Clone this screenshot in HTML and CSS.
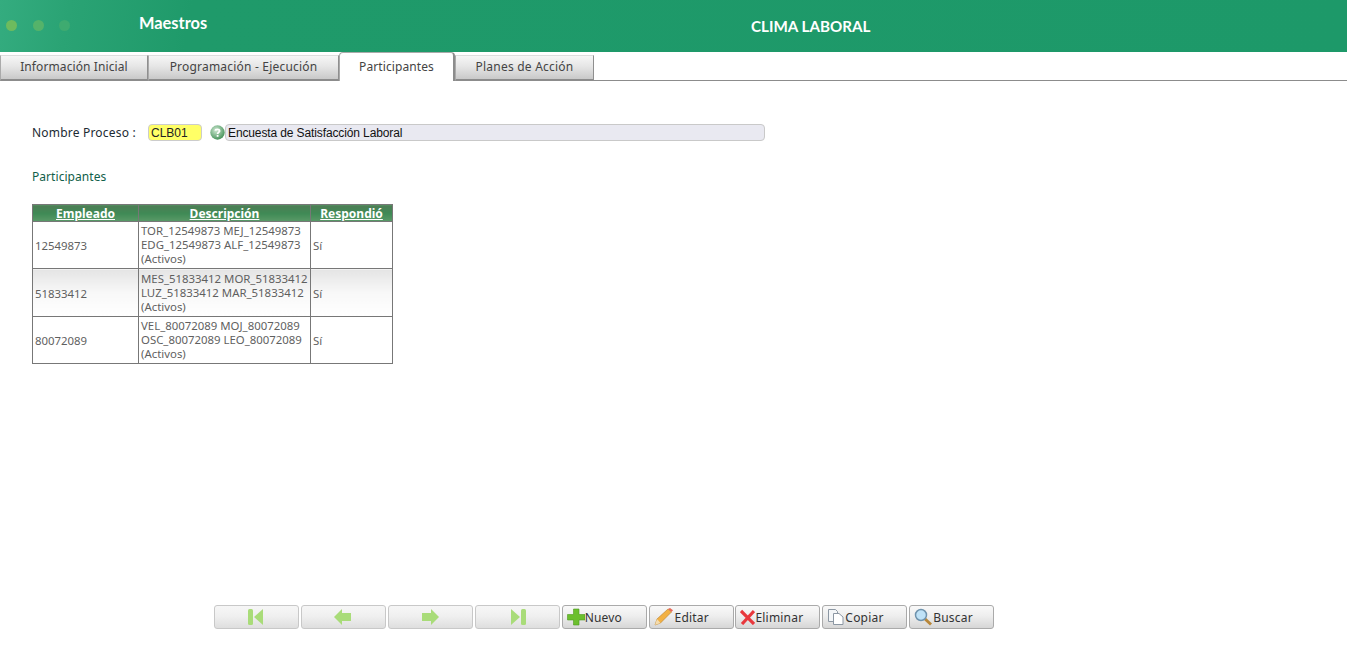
FILE: index.html
```html
<!DOCTYPE html>
<html lang="es">
<head>
<meta charset="utf-8">
<title>Clima Laboral</title>
<link rel="stylesheet" href="styles.css">
</head>
<body>
<div class="page">
  <header class="topbar">
    <div class="dots"><i class="dot d1"></i><i class="dot d2"></i><i class="dot d3"></i></div>
    <div class="brand">Maestros</div>
    <div class="title">CLIMA LABORAL</div>
  </header>
  <nav class="tabs">
    <a class="tab t1">Información Inicial</a>
    <a class="tab t2">Programación - Ejecución</a>
    <a class="tab t3 active">Participantes</a>
    <a class="tab t4">Planes de Acción</a>
  </nav>
  <main class="content">
    <div class="process">
      <span class="plabel">Nombre Proceso :</span>
      <span class="code">CLB01</span>
      <svg class="help" width="15" height="15" viewBox="0 0 15 15"><defs><radialGradient id="hg" cx=".4" cy=".35" r=".7"><stop offset="0" stop-color="#cfe8d2"/><stop offset="1" stop-color="#3f8f55"/></radialGradient></defs><circle cx="7.5" cy="7.5" r="7.2" fill="url(#hg)"/><path d="M5.2 5.600c.2-1.600 4.200-1.900 4.400.2.100 1.500-2 1.600-2 3.100" fill="none" stroke="#fff" stroke-width="1.800"/><rect x="6.700" y="10" width="1.800" height="1.800" fill="#fff"/></svg>
      <span class="desc">Encuesta de Satisfacción Laboral</span>
    </div>
    <h2 class="section">Participantes</h2>
    <table class="grid">
      <colgroup><col class="c1"><col class="c2"><col class="c3"></colgroup>
      <thead>
        <tr><th><a>Empleado</a></th><th><a>Descripción</a></th><th><a>Respondió</a></th></tr>
      </thead>
      <tbody>
        <tr><td class="mid">12549873</td><td>TOR_12549873 MEJ_12549873 EDG_12549873 ALF_12549873 (Activos)</td><td class="mid">Sí</td></tr>
        <tr class="alt"><td class="mid">51833412</td><td>MES_51833412 MOR_51833412 LUZ_51833412 MAR_51833412 (Activos)</td><td class="mid">Sí</td></tr>
        <tr><td class="mid">80072089</td><td>VEL_80072089 MOJ_80072089 OSC_80072089 LEO_80072089 (Activos)</td><td class="mid">Sí</td></tr>
      </tbody>
    </table>
  </main>
  <footer class="toolbar">
    <button class="btn nav"><svg width="20" height="18" viewBox="0 0 20 18"><rect x="1" y="1" width="5" height="16" rx="1.500" fill="#a9dc79"/><path d="M7 9l9-8v16z" fill="#a9dc79"/></svg></button>
    <button class="btn nav"><svg width="20" height="18" viewBox="0 0 20 18"><path d="M1 9l8-8v4h9v8H9v4z" fill="#a9dc79"/></svg></button>
    <button class="btn nav"><svg width="20" height="18" viewBox="0 0 20 18"><path d="M19 9l-8-8v4H2v8h9v4z" fill="#a9dc79"/></svg></button>
    <button class="btn nav"><svg width="20" height="18" viewBox="0 0 20 18"><path d="M13 9L4 1v16z" fill="#a9dc79"/><rect x="14" y="1" width="5" height="16" rx="1.500" fill="#a9dc79"/></svg></button>
    <button class="btn"><svg width="18" height="18" viewBox="0 0 18 18"><path d="M6.500 1h5.500v5.500h6v5.500h-6v5H6.500v-5H.5V6.500h6z" fill="#6cbf2e" stroke="#4f9a1f" stroke-width=".6"/></svg><span>Nuevo</span></button>
    <button class="btn"><svg width="20" height="18" viewBox="0 0 20 18"><path d="M1 17l2-6L14 1l3.500 3L6.500 15z" fill="#f2b144" stroke="#b9802c" stroke-width=".6"/><path d="M14 1l3.500 3 1.500-1.800L16 0z" fill="#e86a5a"/><path d="M1 17l2-6 3.500 4z" fill="#f4dcae"/></svg><span class="gap">Editar</span></button>
    <button class="btn"><svg width="15" height="16" viewBox="0 0 15 16"><path d="M1 2l13 13M14 2L2 15" stroke="#e8383d" stroke-width="3.200" fill="none"/></svg><span>Eliminar</span></button>
    <button class="btn"><svg width="18" height="18" viewBox="0 0 18 18"><path d="M1.500 1.500h7l2 2v10h-9z" fill="#f4f6f8" stroke="#8c97a3"/><path d="M6.500 5.500h5.500l4 3.500v7.500h-9.500z" fill="#fff" stroke="#8c97a3"/></svg><span>Copiar</span></button>
    <button class="btn"><svg width="19" height="18" viewBox="0 0 19 18"><path d="M10 10l7 6.500" stroke="#b8873a" stroke-width="3"/><circle cx="7" cy="7" r="5.500" fill="#bfe2f7" stroke="#6f93ad" stroke-width="1.500"/></svg><span>Buscar</span></button>
  </footer>
</div>
</body>
</html>
```

FILE: styles.css
```css
* { box-sizing: border-box; }
html, body { margin: 0; padding: 0; background: #fff; }
.page {
  height: 652px;
  display: flex;
  flex-direction: column;
  font-family: "DejaVu Sans", Verdana, sans-serif;
  overflow: hidden;
}
.topbar {
  height: 52px;
  flex: none;
  display: flex;
  align-items: center;
  color: #fff;
  background: linear-gradient(100deg, #34ac7f 0, #2aa374 70px, #1f9a6a 190px, #1d9969 100%);
}
.dots { width: 139px; display: flex; gap: 15.500px; padding-left: 6px; margin-top: -2px; flex: none; }
.dot { width: 11px; height: 11px; border-radius: 50%; display: block; }
.d1 { background: #6dbb5e; }
.d2 { background: #55b36a; }
.d3 { background: #3eab70; }
.brand { font: 700 16.400px "Lato", sans-serif; width: 612px; flex: none; margin-top: -7px; }
.title { font: 700 15.200px "Lato", sans-serif; }
.tabs {
  height: 29px;
  flex: none;
  display: flex;
  align-items: flex-end;
  border-bottom: 1px solid #8c8c8c;
}
.tab {
  height: 26px;
  margin-bottom: -1px;
  padding-bottom: 2px;
  display: flex;
  align-items: center;
  justify-content: center;
  font-size: 12px;
  font-family: "Noto Sans", sans-serif;
  letter-spacing: .1px;
  color: #444;
  border: 1px solid #8f8f8f;
  border-left-color: #aaa;
  border-bottom: 2px solid #8c8c8c;
  border-top-color: #ddd;
  background: linear-gradient(#f6f6f6, #e6e6e6 45%, #c9c9c9);
}
.t1 { width: 148px; }
.t2 { width: 191px; letter-spacing: .2px; }
.t3 { width: 116px; }
.t4 { width: 139px; letter-spacing: .22px; }
.tab.active {
  height: 29px;
  background: #fff;
  border: 1px solid #aaa;
  border-right: 2px solid #8c8c8c;
  border-bottom: 0;
  border-radius: 4px 4px 0 0;
  position: relative;
}
.content { padding: 42px 0 0 32px; flex: 1; }
.process { display: flex; align-items: center; height: 18px; font-size: 12px; }
.plabel { width: 116px; font-family: "Noto Sans", sans-serif; letter-spacing: .2px; color: #1c2b33; flex: none; }
.code {
  width: 54px; height: 17px; padding-left: 2px;
  font: 12px/16px "Liberation Sans", sans-serif; color: #222;
  background: #ffff66; border: 1px solid #ccc; border-radius: 4px; flex: none;
}
.help { margin: 0 0 0 8px; flex: none; }
.desc {
  width: 540px; height: 17px; padding-left: 2px;
  font: 12px/16px "Liberation Sans", sans-serif; letter-spacing: -.12px; color: #111;
  background: #e9e9f1; border: 1px solid #c9c9c9; border-radius: 4px; flex: none;
}
.section {
  margin: 27px 0 0;
  height: 18px;
  font: 400 12px/18px "Noto Sans", sans-serif;
  letter-spacing: .05px;
  color: #11604a;
}
.grid {
  margin-top: 18px;
  width: 360px;
  table-layout: fixed;
  border-collapse: collapse;
  font: 11.400px/14px "Noto Sans", sans-serif;
  color: #5f5f5f;
  border: 1px solid #777;
}
.c1 { width: 106px; }
.c2 { width: 172px; }
.c3 { width: 82px; }
.grid th {
  height: 17px;
  padding: 0;
  border: 1px solid #777;
  font: 700 12px/15px "Noto Sans", sans-serif;
  color: #fff;
  background: linear-gradient(#4e7d55, #3f8a55 50%, #5a9a68);
}
.grid th a { text-decoration: underline; }
.grid td { height: 47px; padding: 1px 2px; border: 1px solid #777; overflow: hidden; }
.grid td.mid { padding-top: 3px; }
.grid tr.alt td { height: 48px; background: linear-gradient(#e4e4e4, #f8f8f8 50%, #fff); }
.toolbar {
  flex: none;
  display: flex;
  gap: 1.910px;
  margin: 0 0 23px 214px;
  height: 24px;
}
.btn {
  width: 85px;
  height: 24px;
  padding: 0 0 0 4px;
  display: flex;
  align-items: center;
  justify-content: flex-start;
  font: 12px "Noto Sans", sans-serif;
  letter-spacing: .2px;
  color: #333;
  border: 1px solid #aaa;
  border-radius: 3px;
  background: linear-gradient(#f9f9f9, #eeeeee 45%, #d6d6d6);
}
.btn.nav { justify-content: center; padding: 0; border-color: #c8c8c8; background: linear-gradient(#f6f6f6, #f0f0f0 45%, #dedede); }
.gap { margin-left: 1px; }
```
